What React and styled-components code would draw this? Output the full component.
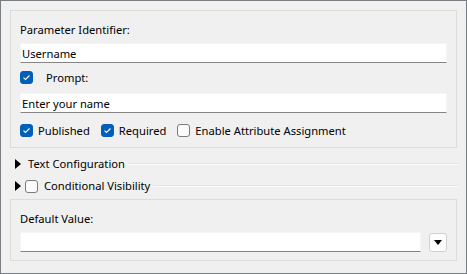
import React from "react";
import styled, { createGlobalStyle } from "styled-components";

const Global = createGlobalStyle`
  html, body { margin: 0; padding: 0; background: #f0f0f0; }
  * { box-sizing: border-box; }
`;

const Frame = styled.div`
  width: 467px;
  height: 274px;
  border: 1px solid #7a7d82;
  background: #f0f0f0;
  padding: 9px 9px 0 9px;
  display: flex;
  flex-direction: column;
  font-family: "Segoe UI", "Noto Sans", sans-serif;
  font-size: 11.2px;
  color: #000;
`;

const Panel = styled.div`
  border: 1px solid #dcdcdc;
  padding: 8px 9px ${(p) => p.$pb}px 9px;
  display: flex;
  flex-direction: column;
`;

const Label = styled.div`
  height: 20px;
  line-height: 21px;
  white-space: nowrap;
`;

const TextBox = styled.div`
  height: 20px;
  margin-top: ${(p) => p.$mt}px;
  background: #fff;
  border: 1px solid #f5f5f5;
  border-bottom: 1px solid #858585;
  padding: 0 1px;
  line-height: 19px;
  white-space: nowrap;
  flex: ${(p) => (p.$grow ? 1 : "none")};
`;

const Row = styled.div`
  height: 21px;
  margin-top: ${(p) => p.$mt}px;
  display: flex;
  align-items: center;
`;

const Box = styled.span`
  width: 13px;
  height: 13px;
  flex: none;
  border-radius: 3px;
  display: inline-flex;
  align-items: center;
  justify-content: center;
  background: ${(p) => (p.$on ? "#005fb8" : "#fbfbfb")};
  border: 1px solid ${(p) => (p.$on ? "#005fb8" : "#7b7b7b")};
`;

const CheckItem = styled.label`
  display: inline-flex;
  align-items: center;
  white-space: nowrap;
  margin-right: ${(p) => p.$mr || 0}px;
`;

const CheckText = styled.span`
  margin-left: ${(p) => p.$ml}px;
  line-height: 21px;
`;

const Check = ({ on }) => (
  <Box $on={on}>
    {on && (
      <svg width="9" height="7" viewBox="0 0 9 7">
        <path d="M1.5 3.6 L3.5 5.5 L7.5 1.5" fill="none" stroke="#fff" strokeWidth="1.1" />
      </svg>
    )}
  </Box>
);

const Middle = styled.div`
  padding: 5px 0 2px 0;
  display: flex;
  flex-direction: column;
`;

const Section = styled.div`
  height: 22px;
  display: flex;
  align-items: center;
  padding-left: 5px;
`;

const Arrow = styled.span`
  width: 0;
  height: 0;
  flex: none;
  border-top: 5px solid transparent;
  border-bottom: 5px solid transparent;
  border-left: 6px solid #000;
  margin-right: ${(p) => p.$mr}px;
`;

const SectionText = styled.span`
  white-space: nowrap;
  line-height: 22px;
  margin-left: ${(p) => p.$ml || 0}px;
`;

const Rule = styled.div`
  flex: 1;
  height: 2px;
  margin-left: 3px;
  margin-right: -1px;
  border-top: 1px solid #e3e3e3;
  border-bottom: 1px solid #fdfdfd;
`;

const DropButton = styled.div`
  width: 18px;
  height: 19px;
  flex: none;
  background: #fdfdfd;
  border: 1px solid #d0d0d0;
  border-radius: 3px;
  display: flex;
  align-items: center;
  justify-content: center;
`;

const DownTri = styled.span`
  width: 0;
  height: 0;
  border-left: 4px solid transparent;
  border-right: 4px solid transparent;
  border-top: 5px solid #000;
`;

const InputRow = styled.div`
  margin-top: 4px;
  display: flex;
  align-items: center;
  gap: 8px;
`;

export default function App() {
  return (
    <>
      <Global />
      <Frame>
        <Panel $pb={6}>
          <Label>Parameter Identifier:</Label>
          <TextBox $mt={4}>Username</TextBox>
          <Row $mt={4}>
            <CheckItem>
              <Check on />
              <CheckText $ml={13}>Prompt:</CheckText>
            </CheckItem>
          </Row>
          <TextBox $mt={5}>Enter your name</TextBox>
          <Row $mt={7}>
            <CheckItem $mr={11}>
              <Check on />
              <CheckText $ml={5}>Published</CheckText>
            </CheckItem>
            <CheckItem $mr={11}>
              <Check on />
              <CheckText $ml={5}>Required</CheckText>
            </CheckItem>
            <CheckItem>
              <Check />
              <CheckText $ml={5}>Enable Attribute Assignment</CheckText>
            </CheckItem>
          </Row>
        </Panel>
        <Middle>
          <Section>
            <Arrow $mr={7} />
            <SectionText>Text Configuration</SectionText>
            <Rule />
          </Section>
          <Section>
            <Arrow $mr={4} />
            <Check />
            <SectionText $ml={6}>Conditional Visibility</SectionText>
            <Rule />
          </Section>
        </Middle>
        <Panel $pb={8}>
          <Label>Default Value:</Label>
          <InputRow>
            <TextBox $mt={0} $grow />
            <DropButton>
              <DownTri />
            </DropButton>
          </InputRow>
        </Panel>
      </Frame>
    </>
  );
}
